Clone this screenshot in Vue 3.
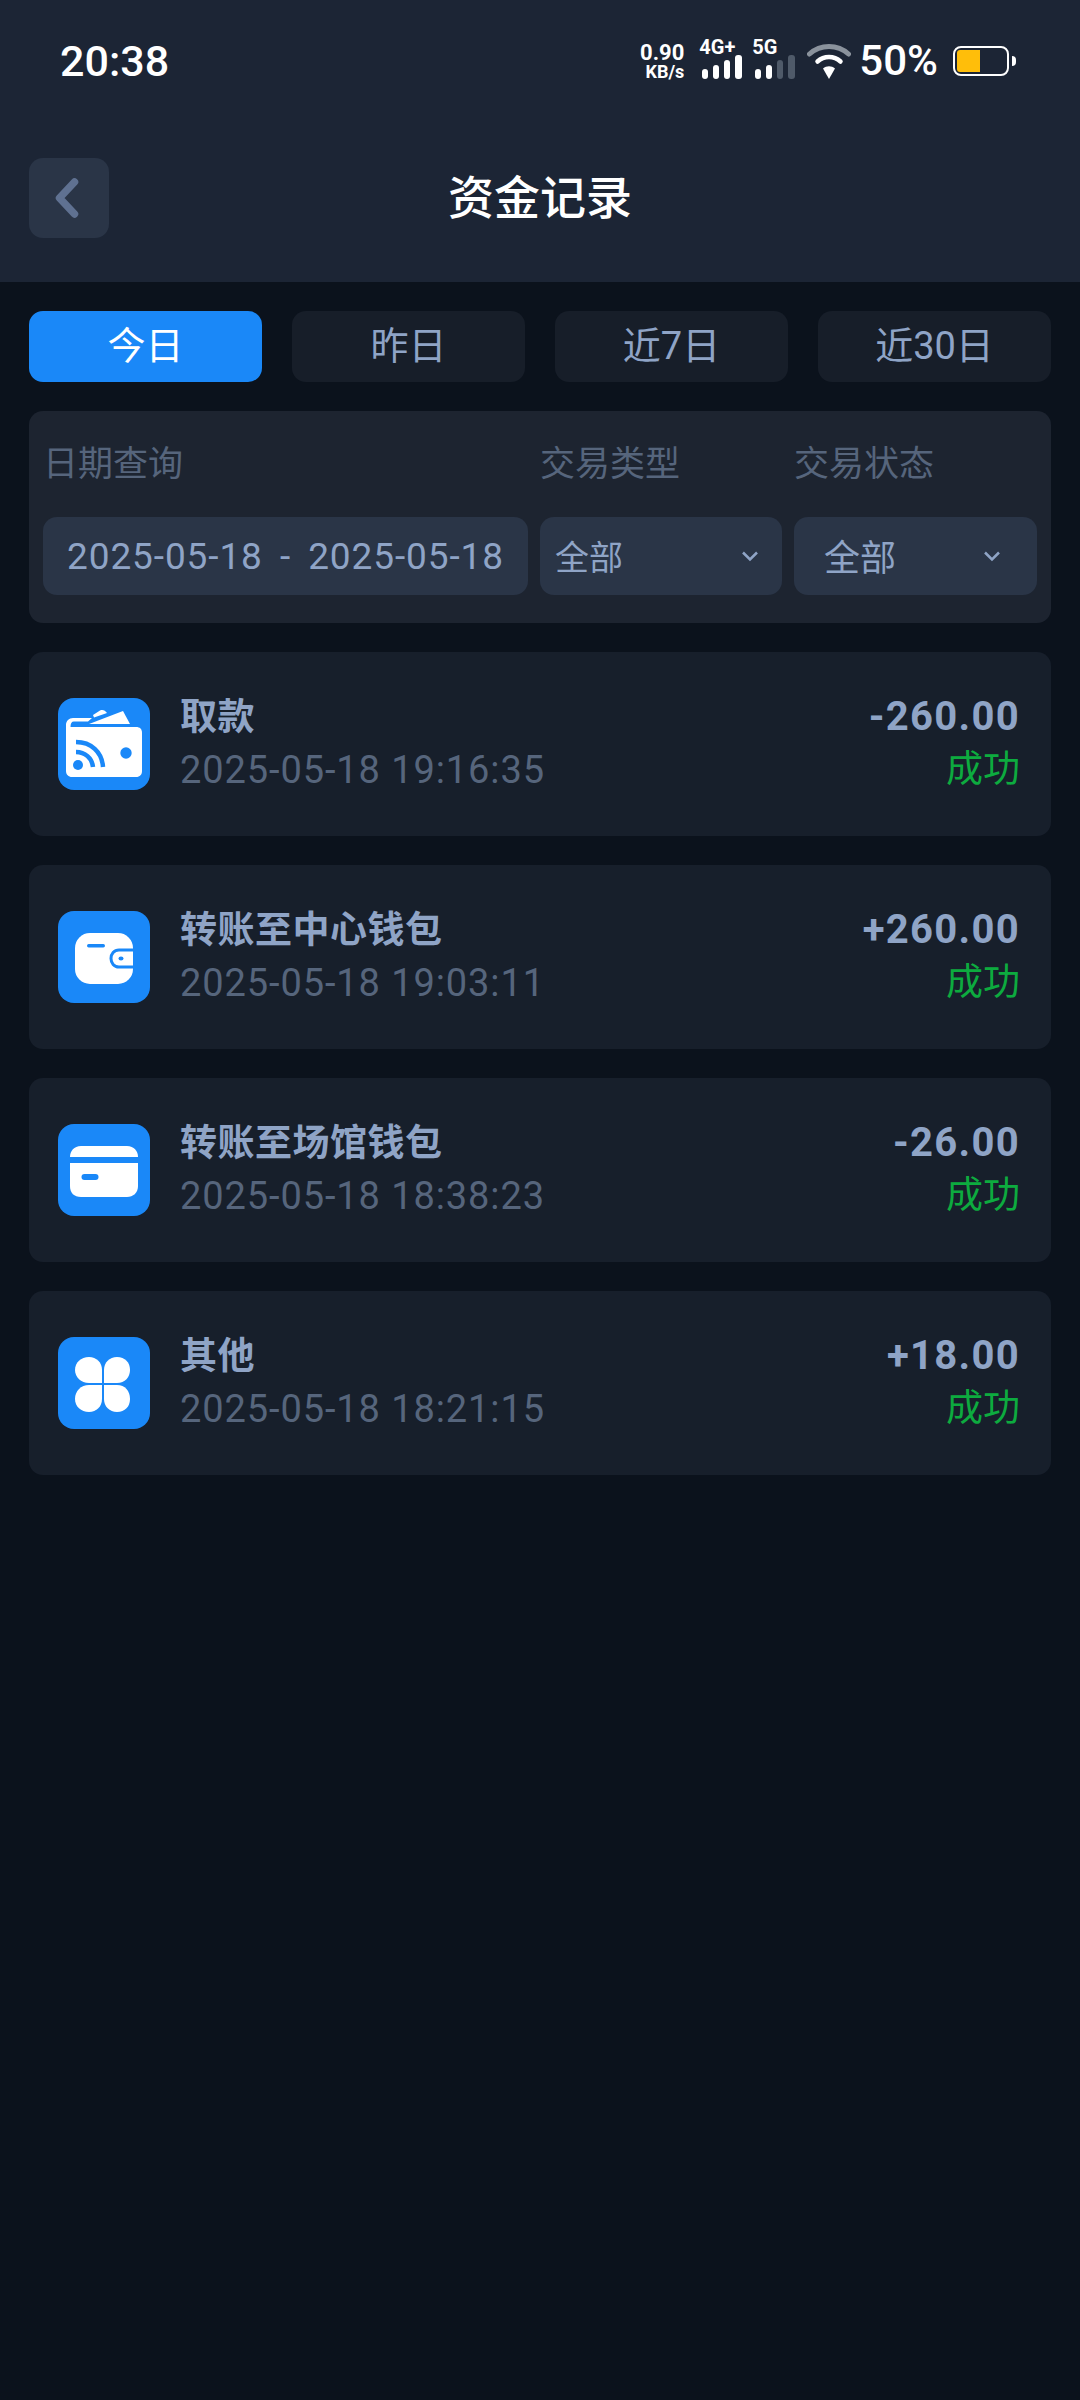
<template>
  <div class="page">
    <div class="header">
      <div class="status">
        <span class="time">20:38</span>
        <div class="status-right">
          <div class="speed"><span class="speed-num">0.90</span><span class="speed-unit">KB/s</span></div>
          <div class="net net-4g">
            <span class="net-label">4G+</span>
            <svg width="40" height="24" viewBox="0 0 40 24" class="bars">
              <rect x="0" y="14" width="6" height="10" rx="3" fill="#fff" />
              <rect x="11" y="10" width="6" height="14" rx="3" fill="#fff" />
              <rect x="22" y="5" width="6" height="19" rx="3" fill="#fff" />
              <rect x="33" y="0" width="7" height="24" rx="3" fill="#fff" />
            </svg>
          </div>
          <div class="net net-5g">
            <span class="net-label">5G</span>
            <svg width="40" height="24" viewBox="0 0 40 24" class="bars">
              <rect x="0" y="14" width="6" height="10" rx="3" fill="#fff" />
              <rect x="11" y="10" width="6" height="14" rx="3" fill="#fff" />
              <rect x="22" y="5" width="6" height="19" rx="3" fill="#4f5a69" />
              <rect x="33" y="0" width="7" height="24" rx="3" fill="#4f5a69" />
            </svg>
          </div>
          <svg class="wifi" width="44" height="36" viewBox="0 0 44 36">
            <path d="M2.5 11C13.5 1 30.500 1 41.500 11" fill="none" stroke="#8a929c" stroke-width="5" stroke-linecap="round" />
            <path d="M10.500 18.500C17 12.500 27 12.500 33.500 18.500" fill="none" stroke="#fff" stroke-width="4.500" stroke-linecap="round" />
            <path d="M16 25.500C19.500 22.500 24.500 22.500 28 25.500L22 36Z" fill="#fff" />
          </svg>
          <span class="percent">50%</span>
          <div class="battery">
            <div class="battery-box"><div class="battery-fill"></div></div>
            <div class="battery-nub"></div>
          </div>
        </div>
      </div>
      <div class="titlebar">
        <div class="back">
          <svg width="26" height="42" viewBox="0 0 26 42">
            <path d="M20.500 5L5.500 21L20.500 37" fill="none" stroke="#5f7191" stroke-width="7.500" stroke-linecap="round" stroke-linejoin="round" />
          </svg>
        </div>
        <h1>资金记录</h1>
      </div>
    </div>

    <div class="content">
      <div class="tabs">
        <div v-for="(tab, i) in tabs" :key="tab" class="tab" :class="{ active: i === 0 }">{{ tab }}</div>
      </div>

      <div class="filter">
        <div class="filter-label">日期查询</div>
        <div class="filter-label">交易类型</div>
        <div class="filter-label">交易状态</div>
        <div class="field date"><span>2025-05-18</span><span class="dash">-</span><span>2025-05-18</span></div>
        <div class="field select" v-for="n in 2" :key="n">
          <span>全部</span>
          <svg width="18" height="12" viewBox="0 0 18 12">
            <path d="M2 2.500L9 9.500L16 2.500" fill="none" stroke="#8fa4c6" stroke-width="2.500" />
          </svg>
        </div>
      </div>

      <div class="record" v-for="item in records" :key="item.time">
        <div class="icon">
          <svg v-if="item.icon === 'withdraw'" width="92" height="92" viewBox="0 0 92 92">
            <path d="M8 36V27C8 23 11 20 15 20H34L30 23.500H16C13.500 23.500 12.500 25.500 12.500 29H78C82 29 84 31 84 35V73C84 76.500 82 79 78 79H14C10.500 79 8 76.500 8 73Z" fill="#fff" />
            <path d="M31 26L65 13L72 26Z" fill="#fff" />
            <path d="M35 17L42 12.500C45 11.500 47 12.500 49 15L36 19.500Z" fill="#fff" />
            <circle cx="68" cy="55" r="5.700" fill="#1a88f8" />
            <circle cx="20" cy="67" r="5" fill="#1a88f8" />
            <path d="M18 54C27 54 34 60 35 69" fill="none" stroke="#1a88f8" stroke-width="4.500" />
            <path d="M18 44C33 44 44 54 45 69" fill="none" stroke="#1a88f8" stroke-width="4.500" />
          </svg>
          <svg v-else-if="item.icon === 'wallet'" width="92" height="92" viewBox="0 0 92 92">
            <rect x="17" y="22" width="58" height="51" rx="15" fill="#fff" />
            <rect x="29" y="33" width="18" height="3.500" rx="1.700" fill="#1a88f8" />
            <path d="M75 39H61C56 39 53 43 53 47.500C53 52 56 56 61 56H75" fill="#fff" stroke="#1a88f8" stroke-width="3" />
            <ellipse cx="63" cy="47.500" rx="2.500" ry="2" fill="#1a88f8" />
          </svg>
          <svg v-else-if="item.icon === 'card'" width="92" height="92" viewBox="0 0 92 92">
            <path d="M12 33C12 27 16 22 23 22H69C76 22 80 27 80 33Z" fill="#fff" />
            <path d="M12 39H80V62C80 69 75 73 69 73H23C16 73 12 69 12 62Z" fill="#fff" />
            <rect x="23.500" y="50" width="17" height="6" rx="3" fill="#1a88f8" />
          </svg>
          <svg v-else width="92" height="92" viewBox="0 0 92 92">
            <path d="M31 20C38.500 20 44 25.500 44 33V46H31C23 46 17 40 17 33C17 25.500 23 20 31 20Z" fill="#fff" />
            <path d="M59 20C51.500 20 46 25.500 46 33V46H59C67 46 72 40 72 33C72 25.500 67 20 59 20Z" fill="#fff" />
            <path d="M31 75C38.500 75 44 69.500 44 62V48H31C23 48 17 54 17 62C17 69.500 23 75 31 75Z" fill="#fff" />
            <path d="M59 75C51.500 75 46 69.500 46 62V48H59C67 48 72 54 72 62C72 69.500 67 75 59 75Z" fill="#fff" />
          </svg>
        </div>
        <div class="record-main">
          <div class="record-title">{{ item.title }}</div>
          <div class="record-time">{{ item.time }}</div>
        </div>
        <div class="record-side">
          <div class="amount">{{ item.amount }}</div>
          <div class="state">成功</div>
        </div>
      </div>
    </div>
  </div>
</template>

<script setup>
const tabs = ['今日', '昨日', '近7日', '近30日']

const records = [
  { icon: 'withdraw', title: '取款', time: '2025-05-18 19:16:35', amount: '-260.00' },
  { icon: 'wallet', title: '转账至中心钱包', time: '2025-05-18 19:03:11', amount: '+260.00' },
  { icon: 'card', title: '转账至场馆钱包', time: '2025-05-18 18:38:23', amount: '-26.00' },
  { icon: 'other', title: '其他', time: '2025-05-18 18:21:15', amount: '+18.00' }
]
</script>

<style>
html, body {
  background: #0b121c;
}
</style>

<style scoped>
.page {
  width: 1080px;
  min-height: 2400px;
  background: #0b121c;
  font-family: Roboto, "Noto Sans CJK SC", sans-serif;
}

/* 顶部 */
.header {
  height: 282px;
  background: #1c2535;
  box-sizing: border-box;
}

.status {
  height: 122px;
  padding: 0 64px 0 60px;
  display: flex;
  align-items: center;
  justify-content: space-between;
  color: #fff;
}

.time {
  font-size: 43px;
  font-weight: 500;
}

.status-right {
  display: flex;
  align-items: center;
}

.speed {
  display: flex;
  flex-direction: column;
  align-items: flex-end;
  font-weight: 700;
  width: 46px;
}

.speed-num {
  font-size: 22px;
  line-height: 21px;
}

.speed-unit {
  font-size: 18px;
  line-height: 18px;
}

.net {
  position: relative;
  width: 42px;
  height: 36px;
  display: flex;
  align-items: flex-end;
}

.net-4g {
  margin-left: 18px;
}

.net-5g {
  margin-left: 11px;
}

.net-label {
  position: absolute;
  left: -3px;
  top: -8px;
  font-size: 20px;
  line-height: 24px;
  font-weight: 700;
}

.wifi {
  margin-left: 10px;
}

.percent {
  margin-left: 8px;
  font-size: 42px;
  font-weight: 500;
  line-height: 42px;
}

.battery {
  margin-left: 15px;
  display: flex;
  align-items: center;
}

.battery-box {
  width: 56px;
  height: 30px;
  box-sizing: border-box;
  border: 2.500px solid #fff;
  border-radius: 8px;
  padding: 2px;
}

.battery-fill {
  width: 23px;
  height: 100%;
  background: #ffbe0a;
  border-radius: 3px 0 0 3px;
}

.battery-nub {
  width: 4px;
  height: 10px;
  margin-left: 3px;
  background: #fff;
  border-radius: 0 4px 4px 0;
}

.titlebar {
  position: relative;
  height: 160px;
  padding: 36px 29px 0;
  box-sizing: border-box;
}

.back {
  width: 80px;
  height: 80px;
  background: #2a3547;
  border-radius: 14px;
  display: flex;
  align-items: center;
  justify-content: center;
  padding-right: 4px;
  box-sizing: border-box;
}

.titlebar h1 {
  position: absolute;
  left: 0;
  right: 0;
  top: 50px;
  margin: 0;
  text-align: center;
  color: #fff;
  font-size: 46px;
  font-weight: 500;
  line-height: 52px;
}

/* 内容 */
.content {
  padding: 29px 29px 0;
}

.tabs {
  display: flex;
  justify-content: space-between;
}

.tab {
  width: 233px;
  height: 71px;
  border-radius: 14px;
  background: #171e29;
  color: #8fa4c6;
  font-size: 38px;
  line-height: 71px;
  text-align: center;
}

.tab.active {
  background: #1a88f8;
  color: #fff;
}

.filter {
  margin-top: 29px;
  height: 212px;
  padding: 0 14px;
  box-sizing: border-box;
  background: #1d2430;
  border-radius: 14px;
  display: grid;
  grid-template-columns: 485px 242px 243px;
  grid-template-rows: 106px 78px;
  column-gap: 12px;
}

.filter-label {
  color: #56657c;
  font-size: 35px;
  line-height: 108px;
}

.field {
  background: #2a3547;
  border-radius: 14px;
  color: #8fa4c6;
  font-size: 34px;
  display: flex;
  align-items: center;
}

.date {
  padding: 0 24px;
  justify-content: space-between;
  font-size: 37px;
  letter-spacing: 0.9px;
}

.dash {
  padding: 0 4px;
}

.select {
  padding: 0 23px 0 15px;
  justify-content: space-between;
}

.select span {
  margin-top: -2px;
}

.select:last-child {
  padding-left: 30px;
  padding-right: 36px;
  font-size: 36px;
}

.record {
  margin-top: 29px;
  height: 184px;
  padding: 0 31px 0 29px;
  box-sizing: border-box;
  background: #171f2b;
  border-radius: 14px;
  display: flex;
  align-items: center;
}

.icon {
  width: 92px;
  height: 92px;
  background: #1a88f8;
  border-radius: 16px;
  flex: none;
}

.record-main {
  flex: 1;
  margin-left: 30px;
}

.record-title {
  color: #8fa4c6;
  font-size: 37px;
  font-weight: 700;
  line-height: 52px;
  letter-spacing: 0.5px;
}

.record-time {
  color: #56657c;
  font-size: 38px;
  line-height: 52px;
  letter-spacing: 0.9px;
}

.record-side {
  text-align: right;
}

.amount {
  color: #8fa4c6;
  font-size: 40px;
  font-weight: 700;
  line-height: 52px;
  letter-spacing: 1.3px;
}

.state {
  color: #0dab3f;
  font-size: 37px;
  line-height: 54px;
}
</style>
